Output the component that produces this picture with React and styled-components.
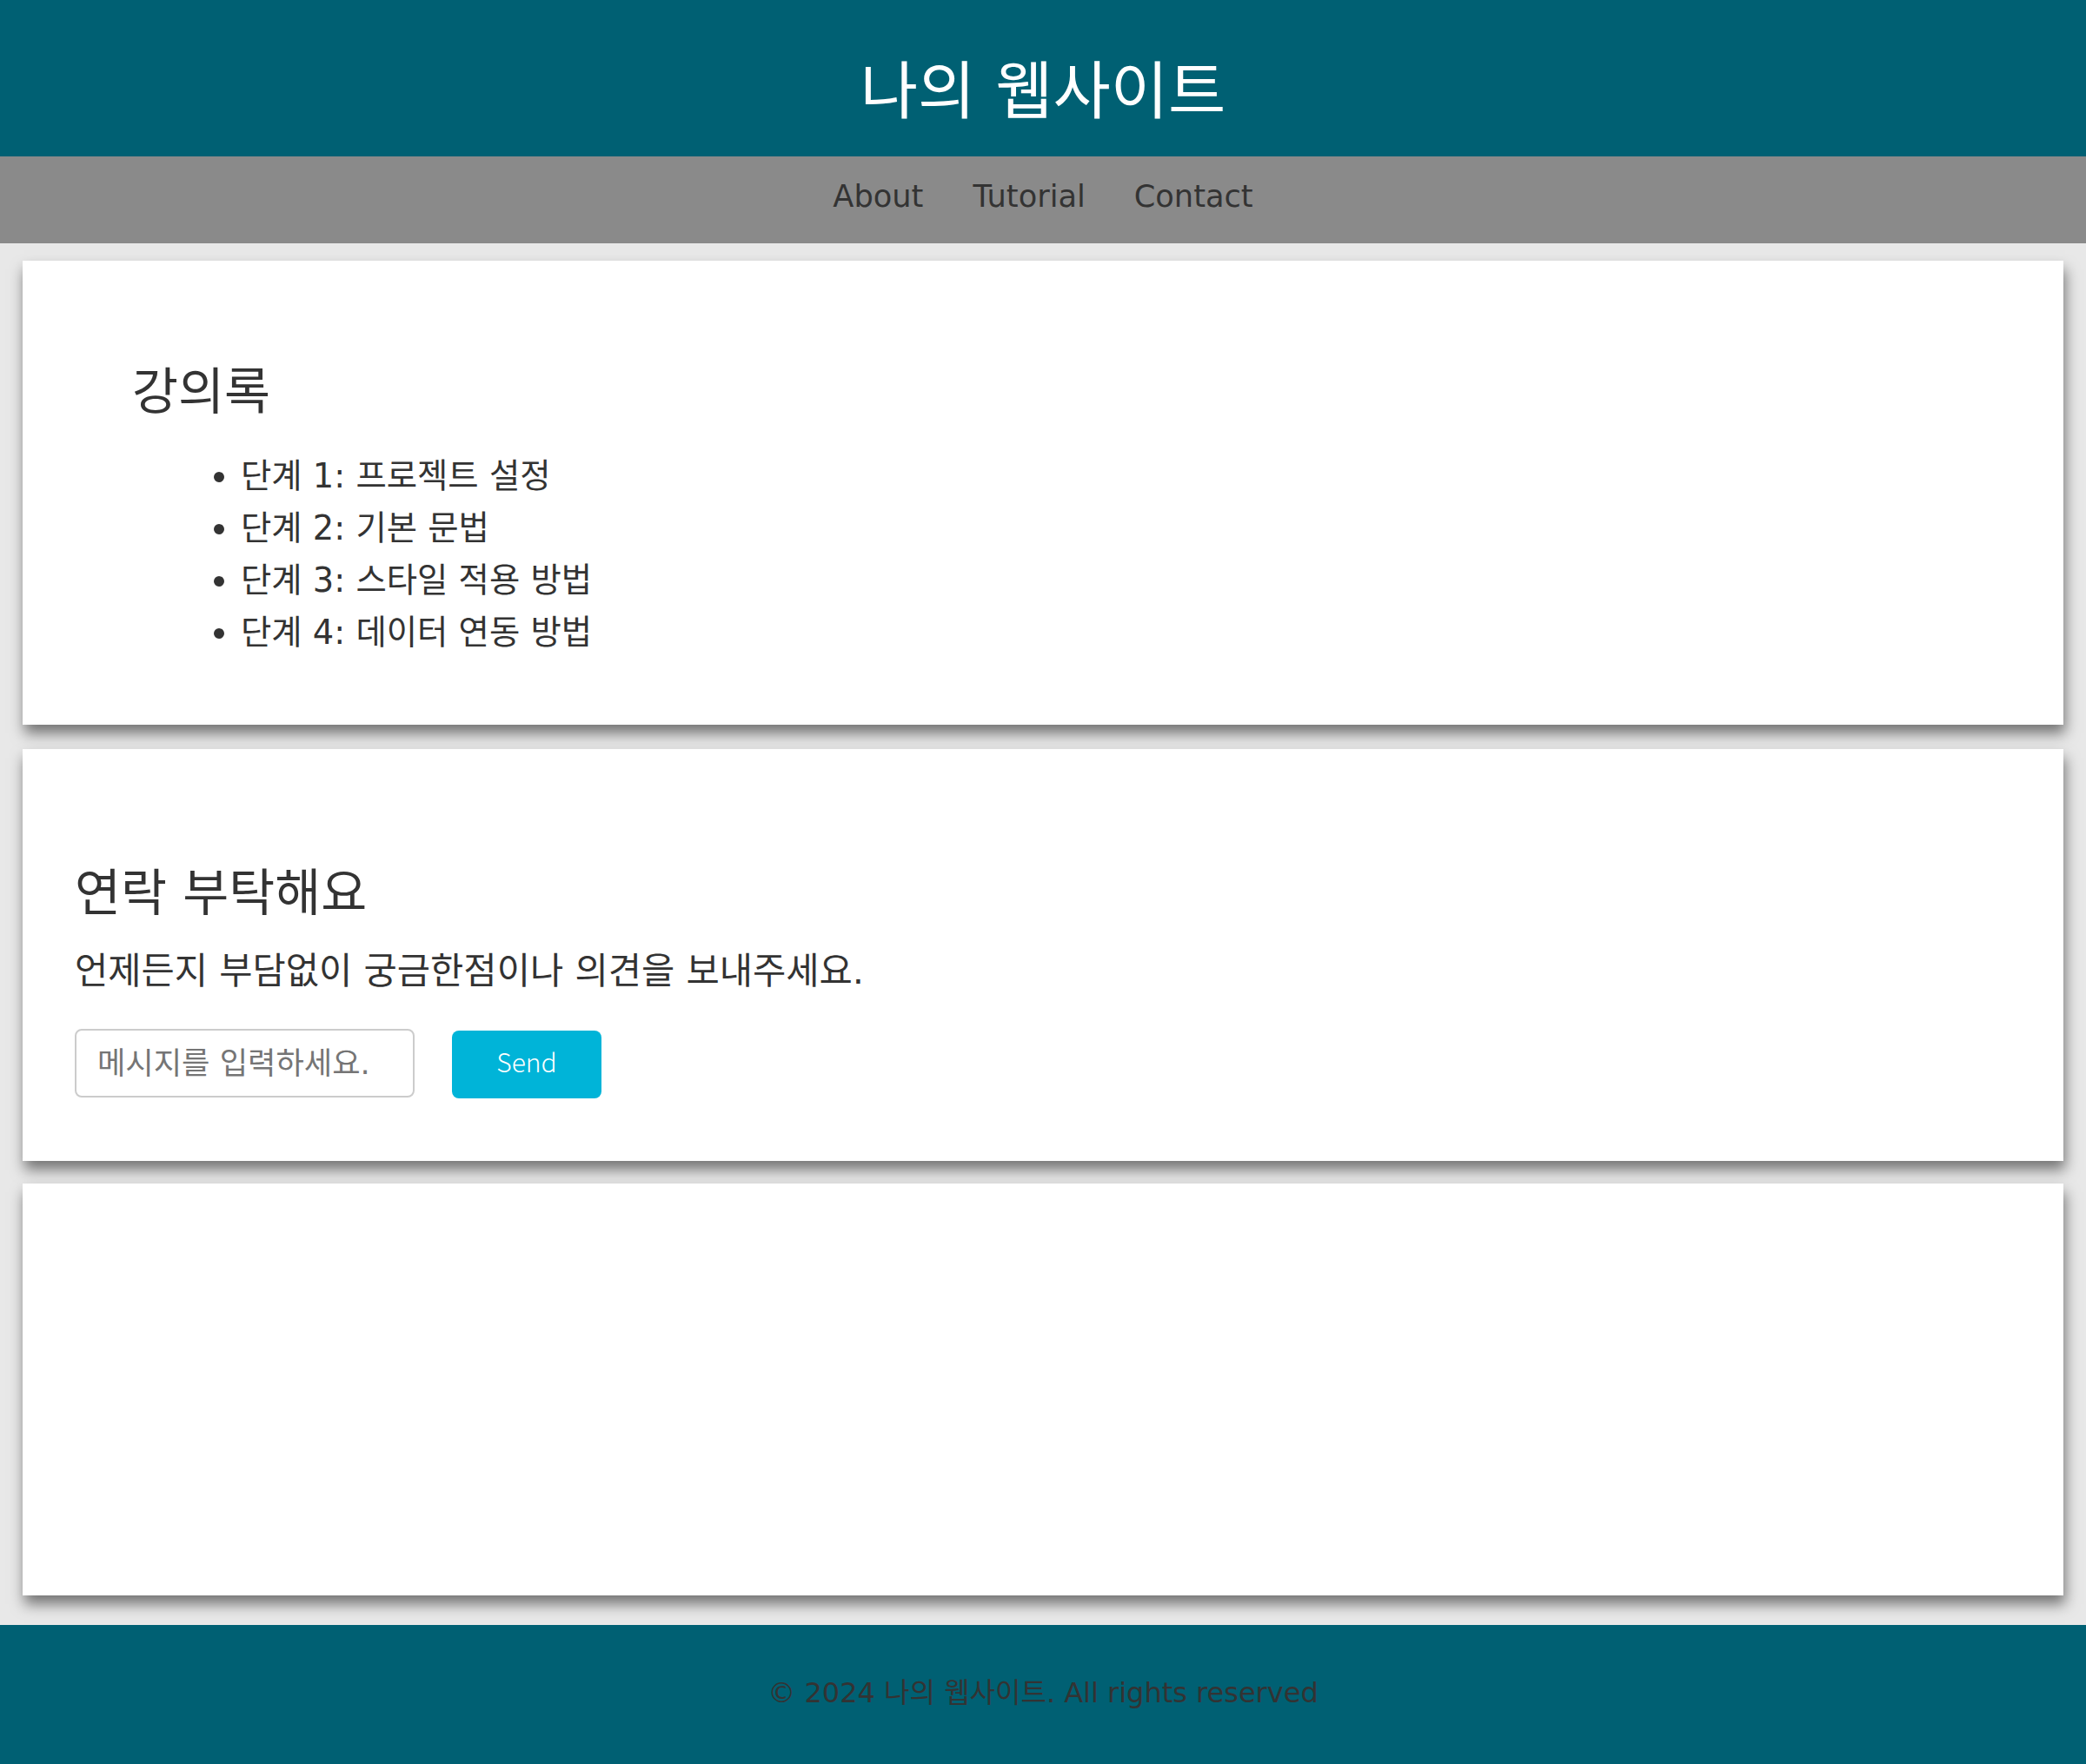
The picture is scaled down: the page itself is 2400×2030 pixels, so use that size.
import React from "react";
import styled, { createGlobalStyle } from "styled-components";

const GlobalStyle = createGlobalStyle`
  html, body {
    margin: 0;
    padding: 0;
    background: #e8e8e8;
  }
  body {
    font-family: "DejaVu Sans", "Noto Sans CJK KR", sans-serif;
    color: #333;
  }
  * { box-sizing: border-box; }
`;

const Page = styled.div`
  display: flex;
  flex-direction: column;
  min-height: 2030px;
`;

const Header = styled.header`
  background: #006073;
  padding: 55px 0 25px;
  text-align: center;
`;

const Title = styled.h1`
  margin: 0;
  font-size: 72px;
  line-height: 100px;
  font-weight: normal;
  color: #ffffff;
`;

const Nav = styled.nav`
  background: #8a8a8a;
  display: flex;
  justify-content: center;
  gap: 52px;
  padding: 0 0 8px;
`;

const NavLink = styled.a`
  font-size: 35.2px;
  line-height: 92px;
  color: #333;
  text-decoration: none;
  margin-right: ${(p) => p.$extra || 0}px;
`;

const Main = styled.main`
  flex: 1;
  display: flex;
  flex-direction: column;
  padding: 20px 26px 34px;
`;

const Card = styled.section`
  background: #ffffff;
  box-shadow: 2px 10px 15px rgba(0, 0, 0, 0.5);
  margin-top: ${(p) => p.$mt || 0}px;
  padding: ${(p) => p.$pad};
  min-height: ${(p) => p.$minH || 0}px;
`;

const CardTitle = styled.h2`
  margin: 0 0 ${(p) => p.$mb}px;
  font-size: 57.6px;
  line-height: 70px;
  font-weight: normal;
  color: #333;
`;

const StepList = styled.ul`
  margin: 0;
  padding-left: 125px;
  list-style: disc;
`;

const StepItem = styled.li`
  font-size: 38.4px;
  line-height: 60px;
  color: #333;
`;

const Lead = styled.p`
  margin: 0 0 36px;
  font-size: 41.6px;
  line-height: 60px;
  color: #333;
`;

const Form = styled.form`
  display: flex;
  align-items: flex-start;
  gap: 43px;
`;

const Input = styled.input`
  width: 391px;
  height: 79px;
  padding: 0 24px;
  border: 2px solid #cccccc;
  border-radius: 8px;
  font-family: "DejaVu Sans", "Noto Sans CJK KR", sans-serif;
  font-size: 35.2px;
  color: #333;
  background: #fff;
  outline: none;
  &::placeholder {
    color: #757575;
  }
`;

const SendButton = styled.button`
  margin-top: 2px;
  width: 172px;
  height: 78px;
  padding: 0 0 8px;
  border: none;
  border-radius: 8px;
  background: #00b4d8;
  color: #ffffff;
  font-family: "Noto Sans CJK KR", "Open Sans", sans-serif;
  font-size: 30px;
  font-weight: 300;
  cursor: pointer;
`;

const Footer = styled.footer`
  background: #006073;
  padding: 0 0 4px;
  text-align: center;
`;

const FooterText = styled.p`
  margin: 0;
  font-size: 32px;
  line-height: 156px;
  color: #333;
`;

const steps = [
  "단계 1: 프로젝트 설정",
  "단계 2: 기본 문법",
  "단계 3: 스타일 적용 방법",
  "단계 4: 데이터 연동 방법",
];

export default function App() {
  return (
    <>
      <GlobalStyle />
      <Page>
        <Header>
          <Title>나의 웹사이트</Title>
        </Header>
        <Nav>
          <NavLink href="#about" $extra={5}>About</NavLink>
          <NavLink href="#tutorial" $extra={4}>Tutorial</NavLink>
          <NavLink href="#contact">Contact</NavLink>
        </Nav>
        <Main>
          <Card $pad="117px 60px 76px 126px">
            <CardTitle $mb={31}>강의록</CardTitle>
            <StepList>
              {steps.map((s) => (
                <StepItem key={s}>{s}</StepItem>
              ))}
            </StepList>
          </Card>
          <Card $mt={28} $pad="132px 60px 72px">
            <CardTitle $mb={24}>연락 부탁해요</CardTitle>
            <Lead>언제든지 부담없이 궁금한점이나 의견을 보내주세요.</Lead>
            <Form onSubmit={(e) => e.preventDefault()}>
              <Input type="text" placeholder="메시지를 입력하세요." />
              <SendButton type="submit">Send</SendButton>
            </Form>
          </Card>
          <Card $mt={26} $pad="0" $minH={474} />
        </Main>
        <Footer>
          <FooterText>© 2024 나의 웹사이트. All rights reserved</FooterText>
        </Footer>
      </Page>
    </>
  );
}
